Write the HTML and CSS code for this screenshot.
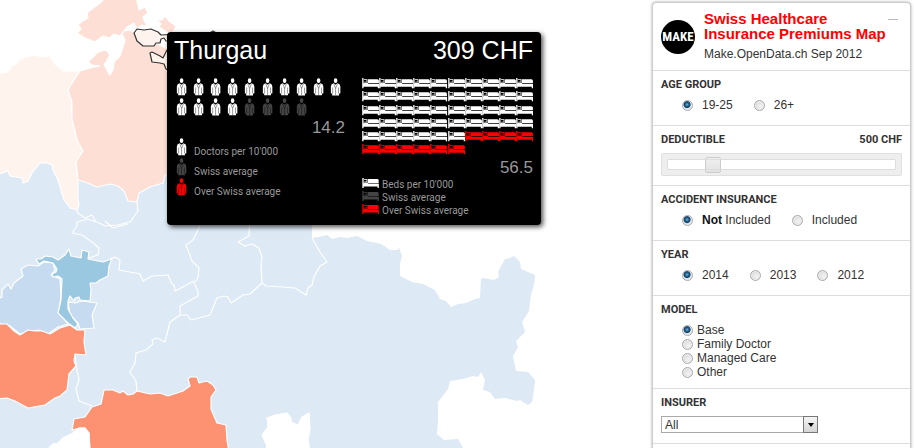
FILE: index.html
```html
<!DOCTYPE html>
<html lang="en">
<head>
<meta charset="utf-8">
<title>Swiss Healthcare Insurance Premiums Map</title>
<link rel="stylesheet" href="styles.css">
</head>
<body>
<main class="page">
  <svg class="map" viewBox="0 0 914 448" preserveAspectRatio="xMinYMin slice" aria-hidden="true">
    <path class="light" d="M-4 160L40 155L90 175L170 165L312 200L312 238L319 237L327 235L332 239L340 237L347 238L357 236L367 241L381 244L390 250L397 250L399 248L402 256L400 264L400 276L412 282L423 284L435 290L440 299L446 301L451 307L458 304L466 303L475 299L480 298L481 279L484 278L494 280L499 277L498 272L505 259L510 258L514 256L520 262L521 269L535 275L534 285L531 294L529 311L522 322L525 332L516 341L518 347L513 356L516 371L528 372L535 380L534 390L532 402L528 405L520 400L517 401L505 398L495 399L490 392L483 390L485 380L481 372L478 377L473 376L463 379L450 381L448 389L438 402L438 420L437 434L444 440L458 439L463 448L463 452L-4 452Z"/>
    <path class="pale" d="M-4 73L8 72L12 66L15 65L20 59L33 55L42 57L50 56L55 64L64 71L80 71L72 83L68 90L72 102L72 119L77 140L83 151L76 162L78 182L78 200L79 205L77 210L70 208L64 200L58 180L53 170L52 165L47 163L40 163L32 173L28 181L23 183L22 178L10 176L8 171L-4 175Z"/>
    <path class="rose" d="M80 71L90 68L100 66L92 65L88 62L92 58L98 52L106 50L110 55L107 60L106 66L109 74L112 70L114 62L120 56L123 47L125 40L122 34L124 31L130 30L137 34L190 60L190 165L165 175L163 183L150 187L139 193L137 202L128 201L124 191L118 186L110 184L97 187L85 182L78 180L76 162L83 151L77 140L72 119L72 102L68 90L72 83Z"/>
    <path class="rose" d="M77 33L81 29L78 25L81 22L88 18L87 13L92 9L100 3L107 -4L136 -4L139 10L145 7L148 13L143 17L147 27L142 25L137 29L134 23L127 27L120 36L114 34L110 38L103 36L95 42L85 38Z"/>
    <path class="rose" d="M157 20L162 20L165 16L169 21L176 26L174 31L170 34L165 31L159 27L161 24Z"/>
    <path class="white" d="M104 64L109 60L114 63L113 70L110 75L106 68Z"/>
    <path class="focus" d="M134 33L137 29L144 30L151 29L158 32L161 35L180 34L180 42L166 41L164 38L161 39L160 43L156 43L154 46L143 46L137 41Z M150 53L152 52L160 56L163 58L167 50L180 48L180 76L166 69L164 64L160 63L152 62Z M208 34L213 31L218 34Z"/>
    <g class="lines">
      <path d="M137 391L136 381L130 372L135 363L136 353L146 350L153 344L152 340L157 338L165 342L170 322L180 315L180 306L198 296L198 291L194 283L198 278L199 268L192 261L186 245L193 240L199 228L201 215"/>
      <path d="M180 315L187 315L191 320L210 315L217 298L224 296L228 297L231 303L243 295L250 294L262 283L261 265L262 257L259 248L252 244L245 246L238 242L249 236L250 215"/>
      <path d="M262 283L266 286L283 287L295 288L306 295L308 288L312 285L314 277L320 266L327 262L320 252L312 238"/>
      <path d="M77 210L78 213L85 218L92 215L96 222L88 219L77 222L77 226L72 233L82 235L92 242L99 248L98 255L89 258M110 259L115 257L120 260L119 270L140 274L143 281L152 276L168 275L172 284L174 285L175 291L194 281M137 202L138 211L130 222L118 225L105 226L97 222M105 221L113 228L128 224"/>
      <path d="M75 355L76 364L79 380L76 389L79 401L92 406"/>
    </g>
    <path class="mid" d="M-4 300L2 297L2 290L8 284L11 289L14 283L23 276L21 269L28 265L38 266L44 262L53 263L55 270L51 275L60 279L61 295L59 312L68 324L58 327L48 334L40 330L30 331L20 334L10 326L-4 323Z"/>
    <path class="mid" d="M68 302L75 303L82 301L97 303L92 315L94 328L80 329L78 323L70 315Z"/>
    <path class="teal" d="M36 259L41 259L45 256L53 257L58 260L65 255L69 249L71 256L81 258L82 250L89 252L88 259L103 262L112 259L109 266L108 276L100 280L96 283L90 283L91 290L90 301L80 300L79 297L75 298L74 301L70 296L68 301L68 309L73 318L78 324L75 328L68 323L58 313L61 300L62 279L58 276L53 277L52 274L56 272L57 269L53 263L44 261L39 264Z"/>
    <path class="coral" d="M-4 324L7 324L14 331L20 335L28 330L35 331L42 331L50 334L60 328L70 325L77 330L85 330L84 342L86 355L75 354L74 361L76 366L69 374L67 390L60 396L55 398L45 405L28 408L15 401L7 398L-4 399Z"/>
    <path class="coral" d="M72 430L74 419L85 417L92 407L101 404L104 390L113 390L120 393L123 391L128 395L133 394L137 391L150 394L160 393L168 396L183 391L190 386L188 379L190 377L197 377L199 383L207 381L213 385L216 390L211 397L211 409L217 423L226 425L227 440L229 452L90 452L89 433L85 428L80 428Z"/>
    <path class="white" d="M45 452L53 444L58 443L63 438L73 433L79 428L85 428L89 433L90 452Z M264 452L267 446L262 435L268 427L267 418L275 415L287 413L291 418L291 422L298 425L302 417L309 413L310 428L308 440L310 452Z"/>
  </svg>

  <article class="card">
    <header class="card-head"><span>Thurgau</span><span>309 CHF</span></header>
    <div class="stats">
      <section class="stat">
        <div class="icons" id="doctors"></div>
        <div class="value">14.2</div>
        <ul class="legend legend-doctors">
          <li data-icon="doctor" data-tone="on">Doctors per 10'000</li>
          <li data-icon="doctor" data-tone="off">Swiss average</li>
          <li data-icon="doctor" data-tone="over">Over Swiss average</li>
        </ul>
      </section>
      <section class="stat">
        <div class="icons" id="beds"></div>
        <div class="value">56.5</div>
        <ul class="legend">
          <li data-icon="bed" data-tone="on">Beds per 10'000</li>
          <li data-icon="bed" data-tone="off">Swiss average</li>
          <li data-icon="bed" data-tone="over">Over Swiss average</li>
        </ul>
      </section>
    </div>
  </article>

  <form class="panel">
    <header class="panel-head">
      <div class="logo">MAKE</div>
      <div class="heading">
        <h1>Swiss Healthcare Insurance Premiums Map</h1>
        <p>Make.OpenData.ch Sep 2012</p>
      </div>
      <button class="minimize" type="button" aria-label="Minimize"></button>
    </header>
    <section class="group">
      <h2>AGE GROUP</h2>
      <div class="row">
        <label><input type="radio" name="age" checked>19-25</label>
        <label><input type="radio" name="age">26+</label>
      </div>
    </section>
    <section class="group">
      <h2><label for="deductible">DEDUCTIBLE</label><output for="deductible">500 CHF</output></h2>
      <div class="slider"><input id="deductible" type="range" min="0" max="100" value="18"></div>
    </section>
    <section class="group">
      <h2>ACCIDENT INSURANCE</h2>
      <div class="row">
        <label><input type="radio" name="accident" checked><span><b>Not</b> Included</span></label>
        <label><input type="radio" name="accident">Included</label>
      </div>
    </section>
    <section class="group">
      <h2>YEAR</h2>
      <div class="row">
        <label><input type="radio" name="year" checked>2014</label>
        <label><input type="radio" name="year">2013</label>
        <label><input type="radio" name="year">2012</label>
      </div>
    </section>
    <section class="group group-list">
      <h2>MODEL</h2>
      <div class="list">
        <label><input type="radio" name="model" checked>Base</label>
        <label><input type="radio" name="model">Family Doctor</label>
        <label><input type="radio" name="model">Managed Care</label>
        <label><input type="radio" name="model">Other</label>
      </div>
    </section>
    <section class="group">
      <h2><label for="insurer">INSURER</label></h2>
      <div class="select">
        <select id="insurer"><option>All</option></select>
        <span class="arrow"></span>
      </div>
    </section>
    <section class="group"></section>
  </form>
</main>
<script src="icons.js"></script>
</body>
</html>
```
FILE: styles.css
```css
* { box-sizing: border-box; }

body {
  margin: 0;
  background: #fff;
  color: #333;
  font: 12px/14px "Liberation Sans", Arial, sans-serif;
}

h1, h2, p, ul { margin: 0; padding: 0; }

.page {
  position: relative;
  display: flex;
  justify-content: flex-end;
  align-items: flex-start;
  height: 100vh;
  padding: 2px 3px 0 0;
  overflow: hidden;
}

/* Map */
.map {
  position: absolute;
  top: 0;
  left: 0;
  width: 100%;
  height: 100%;
}
.map path { stroke: #fff; stroke-width: 1.2; stroke-linejoin: round; }
.map .light { fill: #dde9f5; stroke: none; }
.map .pale { fill: #fff3ee; }
.map .rose { fill: #fddfd5; }
.map .mid { fill: #c6daf0; }
.map .teal { fill: #9ac8e0; }
.map .coral { fill: #fc9272; }
.map .white { fill: #fff; }
.map .focus { fill: #fff3ee; stroke: #333; stroke-width: 1.2; }
.map .lines path { fill: none; }

/* Canton card */
.card {
  position: absolute;
  top: 32px;
  left: 167px;
  width: 374px;
  padding: 3px 8px 8px 7px;
  border-radius: 4px;
  background: #000;
  box-shadow: 2px 2px 5px rgba(0, 0, 0, 0.7);
  color: #999;
}
.card-head {
  display: flex;
  justify-content: space-between;
  margin-bottom: 13px;
  color: #fff;
  font-size: 25px;
  line-height: 30px;
}
.stats {
  display: grid;
  grid-template-columns: 1fr 1fr;
  gap: 17px;
}
.icons {
  display: grid;
  grid-template-columns: repeat(10, 1fr);
}
.icon { display: block; width: 100%; }
.icon.on { color: #fff; }
.icon.off { color: #444; }
.icon.over { color: #f00; }
.value {
  font-size: 17px;
  line-height: 20px;
  text-align: right;
}
.legend {
  list-style: none;
  font: 10px/13px Roboto, sans-serif;
}
.legend li {
  display: flex;
  align-items: flex-start;
  gap: 3px;
}
.legend .icon { width: 17px; height: 13px; }
.legend-doctors li { align-items: flex-end; }
.legend-doctors .icon { height: 20px; }

/* Control panel */
.panel {
  position: relative;
  width: 259px;
  border: 1px solid #ccc;
  border-radius: 4px;
  background: #fff;
  box-shadow: 0 0 3px rgba(0, 0, 0, 0.35);
}
.panel-head {
  display: flex;
  align-items: flex-start;
  gap: 9px;
  padding: 8px 8px 9px;
}
.logo {
  flex: none;
  width: 34px;
  height: 34px;
  margin-top: 9px;
  border-radius: 50%;
  background: #000;
  color: #fff;
  font: bold 13px/34px "Roboto Condensed", "Open Sans Condensed", Roboto, sans-serif;
  display: flex;
  justify-content: center;
}
.heading { flex: 1; white-space: nowrap; }
.heading h1 {
  width: 186px;
  color: #f00;
  font-size: 15px;
  line-height: 15px;
  white-space: normal;
}
.heading p { margin-top: 6px; }
.minimize {
  position: absolute;
  top: 9px;
  right: 12px;
  width: 10px;
  height: 8px;
  padding: 0;
  border: 0;
  border-bottom: 1px solid #bbb;
  background: none;
}
.group {
  min-height: 30px;
  padding: 7px 8px 10px;
  border-top: 1px solid #ddd;
}
.group h2 {
  display: flex;
  justify-content: space-between;
  font: bold 11px/14px Roboto, sans-serif;
}
.row {
  display: flex;
  gap: 21px;
  margin-top: 3px;
  padding-left: 21px;
  line-height: 20px;
}
.row label { display: flex; align-items: center; gap: 9px; }
.row b { color: #111; }
.group-list { padding-bottom: 9px; }
.list { margin-top: 6px; padding-left: 21px; }
.list label { display: flex; align-items: center; gap: 4px; }

input[type="radio"] {
  appearance: none;
  width: 11px;
  height: 11px;
  margin: 0;
  border: 1px solid #aaa;
  border-radius: 50%;
  background: radial-gradient(circle at 60% 60%, #f4f4f4, #d0d0d0);
  box-shadow: inset 0 0 0 1px #eee;
}
input[type="radio"]:checked {
  background: radial-gradient(circle at 45% 40%, #6fb4d4 0, #1d5a86 2px, #123f66 3px, #e4e9ee 4px);
  box-shadow: none;
}
.slider {
  margin-top: 6px;
  padding: 5px;
  border: 1px solid #e0e0e0;
  border-radius: 2px;
  background: #eee;
}
.slider input {
  display: block;
  appearance: none;
  width: 100%;
  height: 11px;
  margin: 0;
  border-radius: 1px;
  outline: 1px solid #ddd;
  outline-offset: -1px;
  background: #fff;
}
.slider input::-webkit-slider-thumb {
  appearance: none;
  width: 16px;
  height: 16px;
  border: 1px solid #ccc;
  border-radius: 2px;
  background: linear-gradient(#f0f0f0, #e2e2e2);
}
.group:has(.slider) { padding-bottom: 9px; }
.select {
  position: relative;
  width: 157px;
  margin-top: 6px;
}
.select select {
  display: block;
  appearance: none;
  width: 100%;
  height: 17px;
  padding: 0 3px;
  border: 1px solid #aaa;
  border-radius: 0;
  background: #fff;
  color: #333;
  font: inherit;
}
.arrow {
  position: absolute;
  top: 0;
  right: 0;
  display: grid;
  place-items: center;
  width: 15px;
  height: 17px;
  border: 1px solid #777;
  background: linear-gradient(#f5f5f5, #d5d5d5);
  pointer-events: none;
}
.arrow::before {
  content: "";
  border: 3px solid transparent;
  border-top: 4px solid #000;
  border-bottom: 0;
}
```
FILE: icons.js
```js
const shapes = {
  doctor: {
    box: "0 0 18 21",
    body: '<ellipse cx="8" cy="2.800" rx="1.900" ry="2.500"/>' +
      '<path d="M6 5.600L8 7L10 5.600Q12.800 6.200 13 9V16.300H11.600V18.300H4.400V16.300H3V9Q3.200 6.200 6 5.600Z"/>' +
      '<path d="M4.900 10V16.300M11.100 10V16.300M6.200 6.500L8 11L9.800 6.500M8 11V18" fill="none" stroke="#000" stroke-opacity=".7" stroke-width=".6"/>'
  },
  bed: {
    box: "0 0 18 14",
    body: '<path d="M.2 0H1.600V6.200H18V10.800H16.600V9.200H1.600V10.800H.2Z"/>' +
      '<path d="M6.200 1.200H16.200Q17.800 1.200 17.800 2.800V5.600H6.200Z"/>' +
      '<path d="M2 1.200H5.700V4.600H2.400V3.900H4.800V2H2Z"/>' +
      '<path d="M1.400 4.900H6.500V6.400H1.400Z"/>'
  }
};

function icon(name, tone) {
  const s = shapes[name];
  return `<svg class="icon ${tone}" viewBox="${s.box}" fill="currentColor" aria-hidden="true">${s.body}</svg>`;
}

function fill(id, name, counts) {
  document.getElementById(id).innerHTML =
    counts.map(([tone, n]) => icon(name, tone).repeat(n)).join("");
}

fill("doctors", "doctor", [["on", 14], ["off", 4]]);
fill("beds", "bed", [["on", 46], ["over", 10]]);

document.querySelectorAll("[data-icon]").forEach((item) => {
  item.insertAdjacentHTML("afterbegin", icon(item.dataset.icon, item.dataset.tone));
});
```
